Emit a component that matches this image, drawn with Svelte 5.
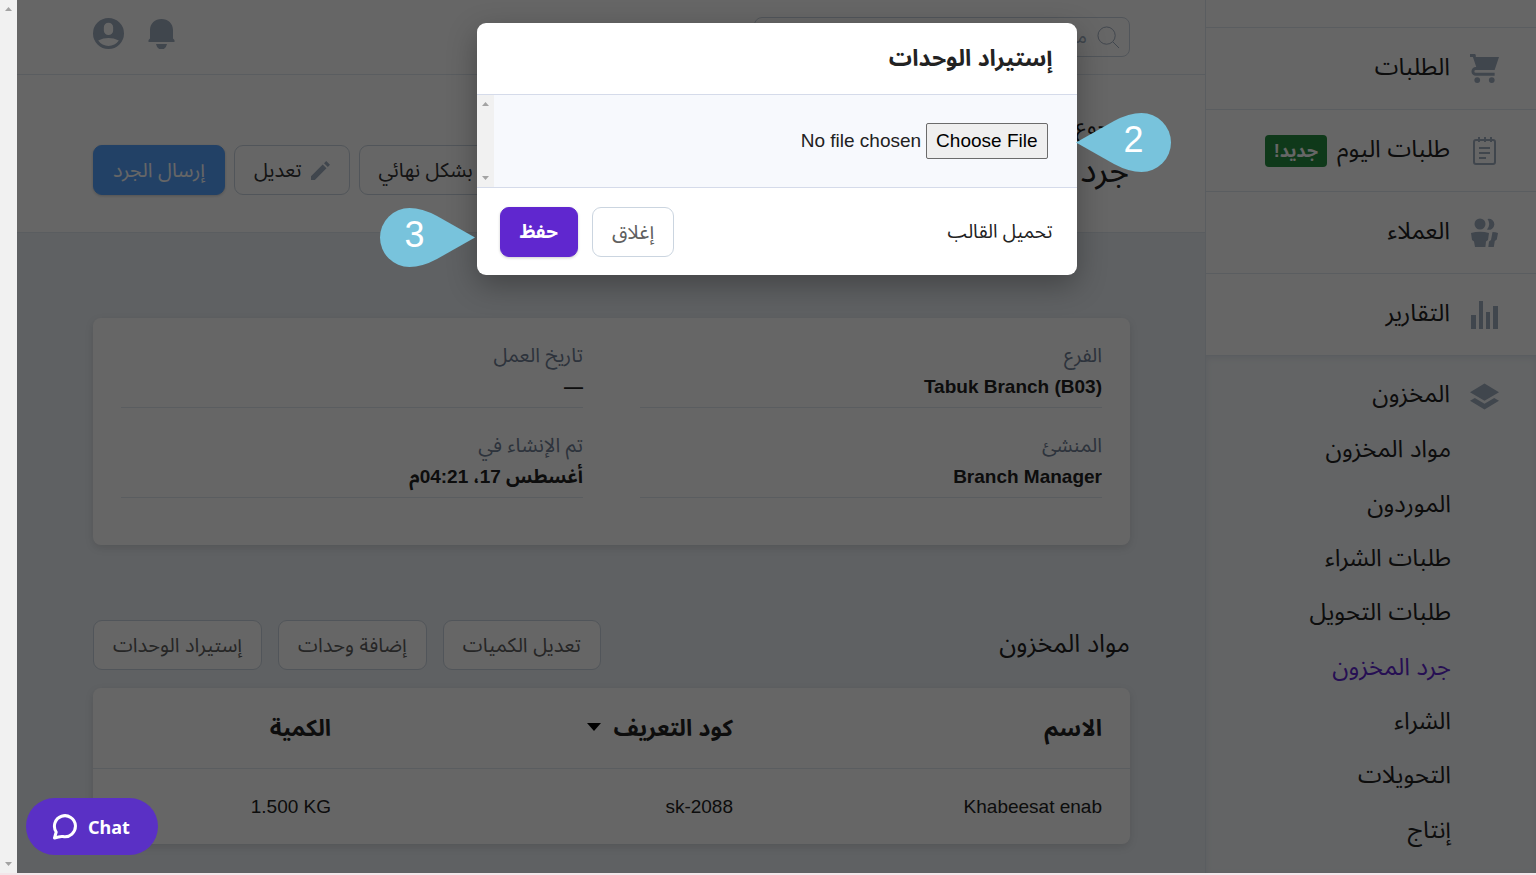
<script>
  const menu = [
    { label: 'الطلبات', icon: 'cart' },
    { label: 'طلبات اليوم', icon: 'notes', badge: 'جديد!' },
    { label: 'العملاء', icon: 'users' },
    { label: 'التقارير', icon: 'chart' }
  ];

  const inventory = [
    'مواد المخزون',
    'الموردون',
    'طلبات الشراء',
    'طلبات التحويل',
    'جرد المخزون',
    'الشراء',
    'التحويلات',
    'إنتاج'
  ];

  const details = [
    { label: 'الفرع', value: 'Tabuk Branch (B03)' },
    { label: 'تاريخ العمل', value: '—' },
    { label: 'المنشئ', value: 'Branch Manager' },
    { label: 'تم الإنشاء في', value: 'أغسطس 17، 04:21م' }
  ];

  const items = [{ name: 'Khabeesat enab', sku: 'sk-2088', quantity: '1.500 KG' }];

  let active = $state('جرد المخزون');
</script>

{#snippet icon(name)}
  {#if name === 'cart'}
    <svg class="icon" viewBox="0 0 20 20"><path d="M4 2h16l-3 9H4a1 1 0 1 0 0 2h13v2H4a3 3 0 0 1 0-6h.33L3 5 2 2H0V0h3a1 1 0 0 1 1 1v1zm1 18a2 2 0 1 1 0-4 2 2 0 0 1 0 4zm10 0a2 2 0 1 1 0-4 2 2 0 0 1 0 4z" /></svg>
  {:else if name === 'notes'}
    <svg class="icon line" viewBox="0 0 29 29">
      <rect x="4" y="4" width="21" height="24" rx="2" />
      <path d="M9 1v5M15 1v5M21 1v5M9 12h11M9 17h11M9 22h7" />
    </svg>
  {:else if name === 'users'}
    <svg class="icon" viewBox="0 0 29 29">
      <circle cx="10" cy="6" r="5.500" />
      <path d="M17.500 1a5.500 5.500 0 1 1-.5 10.500 8 8 0 0 0 .5-10.500zM1 15q9-2.500 18 0l-1 7-2 1.500-.6 5.500H5l-1-5.500-2-1.500zM22.500 14q3 0 5.500 1l-1.200 6.500-2 1.500-1 6h-5.500l.7-5.500 2-1.500z" />
    </svg>
  {:else if name === 'chart'}
    <svg class="icon" viewBox="0 0 29 29"><path d="M1 15h5v14H1zM9 1h4v28H9zM16 12h4v17h-4zM23 6h5v23h-5z" /></svg>
  {:else}
    <svg class="icon" viewBox="0 0 20 20"><path d="M10 1l10 6-10 6L0 7l10-6zm6.670 10L20 13l-10 6-10-6 3.330-2L10 15l6.670-4z" /></svg>
  {/if}
{/snippet}

{#snippet scrollbar()}
  <div class="scrollbar" aria-hidden="true">
    <svg viewBox="0 0 7 4"><path d="M0 4L3.500 0 7 4z" /></svg>
    <svg viewBox="0 0 7 4"><path d="M0 0L3.500 4 7 0z" /></svg>
  </div>
{/snippet}

<div class="app" dir="rtl">
  <aside class="sidebar">
    <div class="menu-top"></div>
    <nav>
      {#each menu as entry}
        <a class="menu-item" href="#{entry.icon}">
          {@render icon(entry.icon)}
          <span class="menu-label">{entry.label}</span>
          {#if entry.badge}<span class="new-badge">{entry.badge}</span>{/if}
        </a>
      {/each}
    </nav>
    <div class="menu-open">
      <a class="menu-head" href="#inventory">
        {@render icon('layers')}
        <span class="menu-label">المخزون</span>
      </a>
      <ul>
        {#each inventory as entry}
          <li>
            <a href="#inventory" class:active={entry === active} onclick={() => (active = entry)}>{entry}</a>
          </li>
        {/each}
      </ul>
    </div>
  </aside>

  <main>
    <header class="topbar">
      <label class="search">
        <svg viewBox="0 0 24 24"><circle cx="10" cy="10" r="9" /><path d="M16.500 16.500L23 23" /></svg>
        <input type="text" aria-label="بحث" placeholder="ما الذي تبحث عنه؟" />
      </label>
      <div class="account">
        <button class="icon-button" aria-label="الإشعارات">
          <svg viewBox="0 0 27 31"><path d="M13.500 1C20 1 25 5.500 25 12v8.500l1.500 1.500v2H.5v-2L2 20.500V12C2 5.500 7 1 13.500 1zM8 26h11q-1 5.500-5.500 5.500T8 26z" /></svg>
        </button>
        <button class="icon-button" aria-label="الحساب">
          <svg viewBox="0 0 20 20"><path d="M10 20a10 10 0 1 1 0-20 10 10 0 0 1 0 20zM7 6v2a3 3 0 1 0 6 0V6a3 3 0 1 0-6 0zm-3.650 8.440a8 8 0 0 0 13.300 0 15.940 15.940 0 0 0-13.300 0z" /></svg>
        </button>
      </div>
    </header>

    <section class="title-bar">
      <div>
        <a class="back" href="#back">الرجوع</a>
        <h1>جرد المخزون</h1>
      </div>
      <div class="actions">
        <button class="btn dark">حفظ بشكل نهائي</button>
        <button class="btn dark">
          <svg viewBox="0 0 20 20"><path d="M12.300 3.700l4 4L4 20H0v-4L12.300 3.700zm1.400-1.400L16 0l4 4-2.300 2.300-4-4z" /></svg>
          تعديل
        </button>
        <button class="btn blue">إرسال الجرد</button>
      </div>
    </section>

    <div class="content">
      <dl class="card details">
        {#each details as field}
          <div class="field">
            <dt>{field.label}</dt>
            <dd>{field.value}</dd>
          </div>
        {/each}
      </dl>

      <div class="section-head">
        <h2>مواد المخزون</h2>
        <div class="section-actions">
          <button class="btn">تعديل الكميات</button>
          <button class="btn">إضافة وحدات</button>
          <button class="btn">إستيراد الوحدات</button>
        </div>
      </div>

      <table class="card">
        <thead>
          <tr>
            <th class="name">الاسم</th>
            <th class="sku">
              كود التعريف
              <svg class="sort" viewBox="0 0 14 8"><path d="M0 0h14L7 8z" /></svg>
            </th>
            <th>الكمية</th>
          </tr>
        </thead>
        <tbody>
          {#each items as item}
            <tr>
              <td>{item.name}</td>
              <td>{item.sku}</td>
              <td><bdi>{item.quantity}</bdi></td>
            </tr>
          {/each}
        </tbody>
      </table>
    </div>
  </main>

  {@render scrollbar()}

  <div class="overlay">
    <div class="modal" role="dialog" aria-labelledby="modal-title">
      <h3 id="modal-title">إستيراد الوحدات</h3>
      <div class="modal-body">
        <input type="file" aria-label="إستيراد الوحدات" />
        {@render scrollbar()}
      </div>
      <div class="modal-foot">
        <a href="#template">تحميل القالب</a>
        <div class="modal-actions">
          <button class="btn">إغلاق</button>
          <button class="btn purple">حفظ</button>
        </div>
      </div>

      <div class="pin pin-file">
        <svg viewBox="0 0 95 59"><path d="M0 29.500L38 8Q53 0 65.500 0a29.500 29.500 0 0 1 0 59Q53 59 38 51z" /></svg>
        <span>2</span>
      </div>
      <div class="pin pin-save">
        <svg viewBox="0 0 95 59"><path d="M95 29.500L57 8Q42 0 29.500 0a29.500 29.500 0 0 0 0 59Q42 59 57 51z" /></svg>
        <span>3</span>
      </div>
    </div>
  </div>

  <button class="chat" dir="ltr">
    <svg viewBox="0 0 26 26"><path d="M2.500 24l1.700-6A10.500 10.500 0 1 1 11 22.500q-3-.5-8.500 1.500z" /></svg>
    Chat
  </button>
</div>

<style>
  :global(body) {
    margin: 0;
  }
  .app {
    position: relative;
    display: flex;
    height: 100vh;
    box-sizing: border-box;
    border-bottom: 2px solid #f3e6ea;
    overflow: hidden;
    background: #edf2f7;
    color: #222;
    font-family: "Liberation Sans", "Noto Sans Arabic", "Noto Kufi Arabic", "DejaVu Sans", sans-serif;
    font-size: 19px;
    line-height: 28px;
  }
  .app * {
    box-sizing: border-box;
  }
  a {
    color: inherit;
    text-decoration: none;
  }
  button,
  input {
    font: inherit;
    color: inherit;
  }
  button {
    cursor: pointer;
  }
  h1,
  h2,
  h3,
  ul,
  dl,
  dd {
    margin: 0;
    padding: 0;
  }
  svg {
    display: block;
    fill: currentColor;
  }

  /* sidebar */
  .sidebar {
    display: flex;
    flex-direction: column;
    flex: 0 0 331px;
    border-left: 1px solid #e2e8f0;
    background: #fff;
    font-size: 24px;
  }
  .menu-top {
    height: 27px;
  }
  .menu-item {
    display: flex;
    align-items: center;
    height: 82px;
    padding-right: 37px;
    border-top: 1px solid #e2e8f0;
  }
  .menu-label {
    padding-bottom: 4px;
  }
  .icon {
    width: 29px;
    height: 29px;
    margin-left: 20px;
    color: #a0aec0;
  }
  .icon.line {
    fill: none;
    stroke: currentColor;
    stroke-width: 2;
  }
  .new-badge {
    margin-right: 10px;
    padding: 0 9px;
    border-radius: 4px;
    background: #268f41;
    color: #fff;
    font-size: 18px;
    font-weight: bold;
    line-height: 32px;
  }
  .menu-open {
    display: flex;
    flex-direction: column;
    flex: 1;
    padding-bottom: 16px;
    border-top: 1px solid #e2e8f0;
    background: #f7fafc;
    box-shadow: inset 0 2px 6px #e2e8f0;
  }
  .menu-head {
    display: flex;
    align-items: center;
    height: 66px;
    padding: 14px 37px 0 0;
  }
  ul {
    display: flex;
    flex-direction: column;
    flex: 1;
    list-style: none;
  }
  li {
    display: flex;
    flex: 1;
    align-items: center;
    padding-right: 85px;
  }
  .active {
    color: #6027cf;
  }

  /* main column */
  main {
    flex: 1;
    min-width: 0;
  }
  .topbar {
    display: flex;
    justify-content: space-between;
    height: 75px;
    padding: 17px 75px 0 76px;
    border-bottom: 1px solid #e2e8f0;
    background: #fff;
  }
  .search {
    display: flex;
    align-items: center;
    width: 376px;
    height: 40px;
    padding: 0 9px;
    border: 1px solid #cbd5e0;
    border-radius: 8px;
  }
  .search svg {
    flex: none;
    width: 23px;
    height: 23px;
    margin-left: 10px;
    fill: none;
    stroke: #a0aec0;
  }
  .search input {
    width: 100%;
    padding: 0;
    border: 0;
    outline: 0;
    background: none;
  }
  .search input::placeholder {
    color: #a0aec0;
  }
  .account {
    display: flex;
    gap: 24px;
  }
  .icon-button {
    height: 32px;
    padding: 0;
    border: 0;
    background: none;
    color: #a0aec0;
  }
  .icon-button svg {
    height: 31px;
  }
  .title-bar {
    display: flex;
    justify-content: space-between;
    height: 158px;
    padding: 38px 76px 0;
    border-bottom: 1px solid #e2e8f0;
    background: #fff;
  }
  .back {
    font-size: 22px;
  }
  h1 {
    font-size: 34px;
    font-weight: normal;
    line-height: 56px;
  }
  .actions {
    display: flex;
    gap: 9px;
    padding-top: 32px;
  }
  .btn {
    display: flex;
    align-items: center;
    height: 50px;
    padding: 0 19px;
    border: 1px solid #cbd5e0;
    border-radius: 9px;
    background: #fff;
    color: #606060;
    font-size: 20px;
    white-space: nowrap;
  }
  .btn svg {
    width: 19px;
    height: 19px;
    margin-left: 9px;
    color: #a0aec0;
  }
  .btn.dark {
    color: #333;
  }
  .btn.blue {
    border-color: #55a2ff;
    background: #55a2ff;
    color: #fff;
    box-shadow: 0 1px 3px rgba(0, 0, 0, 0.2);
  }
  .btn.purple {
    border-color: #6027cf;
    background: #6027cf;
    color: #fff;
    font-size: 19px;
    font-weight: bold;
    box-shadow: 0 1px 3px rgba(0, 0, 0, 0.2);
  }
  .content {
    padding: 85px 75px 0 76px;
  }
  .card {
    border-radius: 8px;
    background: #fff;
    box-shadow: 0 3px 8px rgba(0, 0, 0, 0.12);
  }
  .details {
    display: grid;
    grid-template-columns: 1fr 1fr;
    column-gap: 57px;
    padding: 0 28px 47px;
  }
  .field {
    height: 90px;
    padding-top: 22px;
    border-bottom: 1px solid #e2e8f0;
  }
  dt {
    color: #718096;
    font-size: 20px;
    line-height: 30px;
  }
  dd {
    font-weight: bold;
    line-height: 34px;
  }
  .section-head {
    display: flex;
    justify-content: space-between;
    margin: 75px 0 18px;
  }
  h2 {
    font-size: 25px;
    font-weight: normal;
    line-height: 46px;
  }
  .section-actions {
    display: flex;
    gap: 16px;
  }
  table {
    width: 100%;
    border-spacing: 0;
    table-layout: fixed;
    text-align: right;
  }
  th,
  td {
    padding: 0 28px 0 0;
  }
  th {
    height: 81px;
    border-bottom: 1px solid #e2e8f0;
    font-size: 23px;
  }
  td {
    height: 75px;
  }
  .name {
    width: 369px;
  }
  .sku {
    width: 402px;
  }
  .sort {
    display: inline-block;
    width: 14px;
    height: 8px;
    margin: 0 6px 6px 0;
    vertical-align: middle;
    color: #000;
  }

  .scrollbar {
    display: flex;
    flex: 0 0 17px;
    flex-direction: column;
    justify-content: space-between;
    align-items: center;
    padding: 7px 0;
    background: #f1f1f1;
    color: #a3a3a3;
  }
  .scrollbar svg {
    width: 7px;
    height: 4px;
  }

  /* import dialog */
  .overlay {
    position: absolute;
    inset: 0 0 0 17px;
    display: flex;
    align-items: flex-start;
    justify-content: center;
    padding-top: 23px;
    background: rgba(0, 0, 0, 0.6);
  }
  .modal {
    position: relative;
    width: 600px;
    border-radius: 9px;
    background: #fff;
    box-shadow: 0 10px 30px rgba(0, 0, 0, 0.3);
  }
  h3 {
    padding: 0 24px;
    font-size: 23px;
    line-height: 71px;
  }
  .modal-body {
    display: flex;
    justify-content: space-between;
    height: 94px;
    border: solid #d5dbea;
    border-width: 1px 0;
    background: #f7f9fd;
  }
  .modal-body input {
    align-self: center;
    margin-right: 29px;
  }
  .modal-body input::file-selector-button {
    height: 36px;
    margin-left: 5px;
    padding: 0 9px;
    border: 1px solid #6b6b6b;
    border-radius: 2px;
    background: #efefef;
    color: #000;
    font: inherit;
  }
  .modal-foot {
    display: flex;
    align-items: center;
    justify-content: space-between;
    height: 87px;
    padding: 0 24px 0 23px;
  }
  .modal-actions {
    display: flex;
    gap: 14px;
  }
  .pin {
    position: absolute;
    width: 95px;
    height: 59px;
    color: #78c3dc;
  }
  .pin svg {
    width: 100%;
    height: 100%;
  }
  .pin span {
    position: absolute;
    top: 0;
    color: #fff;
    font-size: 36px;
    line-height: 54px;
  }
  .pin-file {
    top: 90px;
    left: 599px;
  }
  .pin-file span {
    left: 48px;
  }
  .pin-save {
    top: 185px;
    left: -97px;
  }
  .pin-save span {
    left: 25px;
  }

  .chat {
    position: absolute;
    bottom: 18px;
    left: 26px;
    display: flex;
    align-items: center;
    gap: 10px;
    height: 57px;
    padding: 0 28px 0 26px;
    border: 0;
    border-radius: 29px;
    background: #5a30c5;
    color: #fff;
    font: bold 18px "Noto Sans", sans-serif;
  }
  .chat svg {
    width: 26px;
    height: 26px;
    fill: none;
    stroke: currentColor;
    stroke-width: 3;
    stroke-linejoin: round;
  }
</style>
